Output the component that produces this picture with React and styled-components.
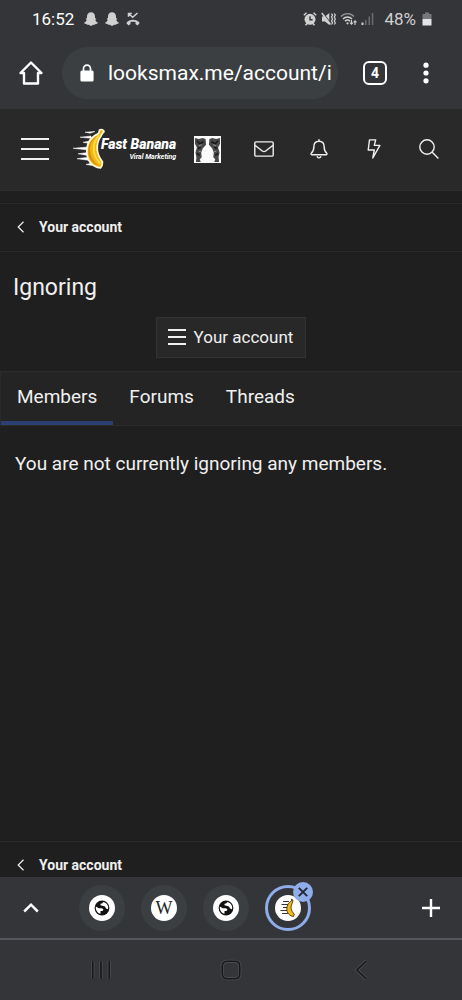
import { useState } from "react";
import styled, { createGlobalStyle } from "styled-components";

const GlobalStyle = createGlobalStyle`
    * {
        box-sizing: border-box;
    }
    body {
        margin: 0;
        background: #1f1f1f;
        color: #f0f0f0;
        font-family: Roboto, sans-serif;
    }
    button, input {
        font: inherit;
        color: inherit;
        background: none;
        border: 0;
        padding: 0;
        margin: 0;
    }
    button {
        cursor: pointer;
    }
    a {
        color: inherit;
        text-decoration: none;
    }
    svg {
        display: block;
        flex: none;
    }
`
const Page = styled.div`
    min-height: 100vh;
    display: flex;
    flex-direction: column;
`
const StatusBar = styled.div`
    height: 38px;
    padding: 0 30px 0 32px;
    display: flex;
    align-items: center;
    justify-content: space-between;
    background: #343539;
    color: #e4e4e4;
    font-size: 17px;
    line-height: 38px;
`
const StatusGroup = styled.div`
    display: flex;
    align-items: center;
    gap: ${(p) => p.$gap}px;
    color: ${(p) => p.$color};
    .time {
        color: #fff;
        margin-right: 3px;
    }
    .percent {
        margin: 0 2px 0 6px;
    }
`
const BrowserBar = styled.div`
    height: 71px;
    padding: 0 23px 2px 18px;
    display: flex;
    align-items: center;
    background: #343539;
    color: #fff;
`
const BarButton = styled.button`
    width: 26px;
    height: 40px;
    display: flex;
    align-items: center;
    justify-content: center;
`
const UrlBox = styled.label`
    flex: 1;
    min-width: 0;
    height: 52px;
    margin: 0 25px 0 18px;
    padding: 0 4px 0 18px;
    display: flex;
    align-items: center;
    gap: 14px;
    border-radius: 26px;
    background: #3b3f42;
    input {
        flex: 1;
        min-width: 0;
        font-size: 21px;
        line-height: 26px;
        outline: 0;
    }
`
const TabCount = styled.button`
    width: 24px;
    height: 24px;
    margin-right: 26px;
    border: 2px solid #fff;
    border-radius: 6px;
    font-size: 14px;
    font-weight: 700;
    line-height: 20px;
    text-align: center;
`
const SiteHeader = styled.header`
    height: 82px;
    padding: 0 6px 1px 21px;
    display: flex;
    align-items: center;
    background: #292929;
    border-bottom: 1px solid #2e2e2e;
`
const Logo = styled.a`
    display: flex;
    align-items: center;
    margin-left: 24px;
    color: #fff;
    font-style: italic;
    font-weight: 900;
    .words {
        margin-left: -5px;
        display: flex;
        flex-direction: column;
        align-items: flex-end;
        white-space: nowrap;
    }
    .name {
        font-size: 14px;
        line-height: 17px;
    }
    .tagline {
        font-size: 7px;
        line-height: 9px;
        font-weight: 700;
    }
`
const Avatar = styled.a`
    margin-left: auto;
    margin-right: 15px;
`
const HeaderButton = styled.button`
    width: 55px;
    height: 55px;
    display: flex;
    align-items: center;
    justify-content: center;
`
const Breadcrumb = styled.nav`
    height: ${(p) => (p.$bottom ? 36 : 49)}px;
    margin-top: ${(p) => (p.$bottom ? 0 : 12)}px;
    padding: 0 17px;
    border-top: 1px solid #2a2a2a;
    border-bottom: ${(p) => (p.$bottom ? 0 : 1)}px solid #2a2a2a;
    a {
        height: 46px;
        display: inline-flex;
        align-items: center;
        gap: 14px;
        font-size: 14px;
        font-weight: 700;
    }
`
const Content = styled.main`
    flex: 1;
    h1 {
        margin: 0;
        padding: 20px 13px 0;
        font-size: 23px;
        line-height: 32px;
        font-weight: 400;
    }
    p {
        margin: 0;
        padding: 25px 15px;
        font-size: 19px;
        line-height: 26px;
    }
`
const AccountButton = styled.button`
    height: 41px;
    margin: 13px auto;
    padding: 0 12px 2px 11px;
    display: flex;
    align-items: center;
    gap: 8px;
    border: 1px solid #333;
    background: #282828;
    font-size: 17px;
    line-height: 24px;
`
const Tabs = styled.div`
    height: 55px;
    display: flex;
    background: #242424;
    border: 1px solid #2b2b2b;
    border-right: 0;
`
const Tab = styled.button`
    padding: 0 16px;
    border-bottom: 4px solid ${(p) => (p.$active ? "#2b3f73" : "transparent")};
    font-size: 19px;
    line-height: 48px;
`
const TabStrip = styled.div`
    height: 63px;
    padding: 0 18px;
    display: flex;
    align-items: center;
    justify-content: space-between;
    background: #343539;
    border-bottom: 2px solid #55565b;
    color: #fff;
`
const SiteList = styled.div`
    flex: 1;
    padding-left: 35px;
    display: flex;
    gap: 16px;
`
const SiteTab = styled.button`
    position: relative;
    width: 46px;
    height: 46px;
    display: flex;
    align-items: center;
    justify-content: center;
    border-radius: 50%;
    border: 3px solid ${(p) => (p.$active ? "#8fadea" : "#3b3f41")};
    background: ${(p) => (p.$active ? "transparent" : "#3b3f41")};
`
const Favicon = styled.span`
    width: 26px;
    height: 26px;
    display: flex;
    align-items: center;
    justify-content: center;
    border-radius: 50%;
    background: #fff;
    color: #222;
    font-family: "Liberation Serif", serif;
    font-size: 18px;
    line-height: 26px;
`
const CloseBadge = styled.span`
    position: absolute;
    top: -6px;
    right: -5px;
    width: 20px;
    height: 20px;
    display: flex;
    align-items: center;
    justify-content: center;
    border-radius: 50%;
    background: #8fadea;
`
const PhoneNav = styled.nav`
    height: 60px;
    padding: 0 36px;
    display: flex;
    background: #343539;
    button {
        flex: 1;
        display: flex;
        align-items: center;
        justify-content: center;
    }
`

const Ghost = () => (
    <svg width="14" height="14" viewBox="0 0 14 14" fill="currentColor">
        <path d="M7 .3C9.500 .3 11 2 11 4.300V6.200L12.300 6.500L11.400 7.900C11.700 9.200 12.500 10 13.900 10.500L13.300 11.700L11.500 12L11 12.800H9.300L7 13.900L4.700 12.800H3L2.500 12L.7 11.700L.1 10.500C1.500 10 2.300 9.200 2.600 7.900L1.700 6.500L3 6.200V4.300C3 2 4.500 .3 7 .3Z" />
    </svg>
)

const MissedCall = () => (
    <svg width="14" height="14" viewBox="0 0 14 14" fill="none" stroke="currentColor">
        <path d="M2.500 4.800V1.500H5.800M2.500 1.500L6.700 5.300L11.500 1" strokeWidth="1.500" />
        <path d="M.3 11C3.500 6.800 10.500 6.800 13.700 11L11.500 13.500L9.500 12V10C8 9.500 6 9.500 4.500 10V12L2.500 13.500Z" fill="currentColor" stroke="none" />
    </svg>
)

const Alarm = () => (
    <svg width="14" height="14" viewBox="0 0 14 14" fill="none" stroke="currentColor">
        <circle cx="7" cy="7.300" r="5.500" fill="currentColor" stroke="none" />
        <path d="M7 4.300V7.700H9.600" stroke="#343539" strokeWidth="1.400" />
        <path d="M.8 3.200L3.500 .8M13.200 3.200L10.500 .8M2.500 13.300L4 11.500M11.500 13.300L10 11.500" strokeWidth="1.500" />
    </svg>
)

const Mute = () => (
    <svg width="15" height="14" viewBox="0 0 15 14" fill="none" stroke="currentColor">
        <path d="M1 4.500H4L8.300 1V13L4 9.500H1Z" fill="currentColor" stroke="none" />
        <path d="M1.500 .5L10 11.500" stroke="#343539" strokeWidth="1.200" />
        <path d="M.8 1L9.500 12.500" strokeWidth="1.500" />
        <path d="M10.500 1.500L11.500 3L10.500 5L11.500 7L10.500 9L11.500 11L10.500 12.500M13.300 1.500L14.300 3L13.300 5L14.300 7L13.300 9L14.300 11L13.300 12.500" strokeWidth="1.300" />
    </svg>
)

const Wifi = () => (
    <svg width="17" height="14" viewBox="0 0 17 14" fill="none" stroke="currentColor">
        <path d="M1 4.500C4.500 .7 10.500 .7 14 4.500" stroke="#929396" strokeWidth="1.400" />
        <path d="M3 7C5.500 4.200 9.500 4.200 12 7M5 9.300C6.500 7.700 8.500 7.700 10 9.300" strokeWidth="1.500" />
        <circle cx="7.500" cy="11.300" r="1.100" fill="currentColor" stroke="none" />
        <path d="M11.500 8V12M10 10.700L11.500 12.300L13 10.700M15 13V9M13.700 10.300L15 8.800L16.500 10.300" strokeWidth="1.100" />
    </svg>
)

const Signal = () => (
    <svg width="13" height="14" viewBox="0 0 13 14">
        <path d="M.5 10.500H2.500V13H.5Z" fill="#d0d0d0" />
        <path d="M4 8H5.500V13H4ZM7.500 4.500H9V13H7.500ZM10.800 1H12.300V13H10.800Z" fill="#6b6c70" />
    </svg>
)

const Battery = () => (
    <svg width="10" height="14" viewBox="0 0 10 14">
        <path d="M3 .5H7V2H9.500V7H.5V2H3Z" fill="#77787b" />
        <path d="M.5 7H9.500V13.500H.5Z" fill="#e4e4e4" />
    </svg>
)

const HomeIcon = () => (
    <svg width="26" height="26" viewBox="0 0 26 26" fill="none" stroke="currentColor" strokeWidth="2.400" strokeLinejoin="round" strokeLinecap="round">
        <path d="M2.500 13L13 2.500L23.500 13H20V23.500H6V13Z" />
    </svg>
)

const LockIcon = () => (
    <svg width="14" height="18" viewBox="0 0 14 18">
        <path d="M3.500 8V4.700A3.500 3.500 0 0 1 10.500 4.700V8" fill="none" stroke="currentColor" strokeWidth="1.700" />
        <rect x=".4" y="6.500" width="13.200" height="11" rx="1.500" fill="currentColor" />
    </svg>
)

const DotsIcon = () => (
    <svg width="6" height="22" viewBox="0 0 6 22" fill="currentColor">
        <circle cx="3" cy="3.200" r="2.600" />
        <circle cx="3" cy="11" r="2.600" />
        <circle cx="3" cy="18.800" r="2.600" />
    </svg>
)

const Lines = ({ width, height, thick }) => (
    <svg width={width} height={height} viewBox={`0 0 ${width} ${height}`} stroke="currentColor" strokeWidth={thick}>
        <path d={`M0 1H${width}M0 ${height / 2}H${width}M0 ${height - 1}H${width}`} />
    </svg>
)

const Banana = () => (
    <svg width="33" height="42" viewBox="0 0 33 42">
        <path
            d="M12 4.200L22 3.500L17 5.200ZM7 9.200L18 8V10.300ZM10 14.300L17 13V15.500ZM0 20.300L15 19V22ZM5 25.800L15 24.500V27.500ZM4 30.700L17 29V32.500ZM13 36.500L21 34.500V37.700Z"
            fill="#fff" stroke="#fff" strokeWidth=".5"
        />
        <path
            d="M26.500 2.200C28 .8 31 1.800 31 3.700C29.500 5.200 28.500 6.200 28 8C24.800 12.500 23.800 17 24.300 22C24.800 27 27 30.500 29.500 34C29.500 36.500 29 38.500 27.500 40C19 39 13.800 32.500 13.800 23.500C13.800 14.500 18.500 8.500 25.500 5.500Z"
            fill="#f4b910" stroke="#fff8dc" strokeWidth="1.700" strokeLinejoin="round"
        />
        <path d="M24.800 7.500C18.500 12 16.500 17 17.300 24C18 30 21.500 35 26.500 38C20 36 15.300 30.500 15.300 23.500C15.300 15.500 19 10.500 24.800 7.500Z" fill="#d98c0b" />
        <path d="M26 7.500C21.500 12 20 18 21 24C22 29 24.300 32.500 27.500 35.500" fill="none" stroke="#ffdc4c" strokeWidth="1.700" />
    </svg>
)

const SmallBanana = () => (
    <svg width="16" height="20" viewBox="0 0 16 20">
        <path d="M3 3.500H9M1.500 6.500H8M3 9.500H7M.5 12.500H7M2 15.500H8" stroke="#333" strokeWidth="1.100" />
        <path
            d="M11.500 1.200L13 2C12.800 5 10.800 7 11 10C11.200 12.800 13 14.500 14.300 16.300L13.500 18.500C9.500 18 6.800 15 6.800 10.800C6.800 6.800 9 4.300 11.500 3Z"
            fill="#f5b916" stroke="#4a3608" strokeWidth=".9" strokeLinejoin="round"
        />
    </svg>
)

const AvatarArt = () => (
    <svg width="27" height="27" viewBox="0 0 28 28">
        <path d="M0 0H28V28H0Z" fill="#fafafa" />
        <path d="M1 2L5 3L9 2L12 3L12.500 9L9 13L7.500 17L8 22L6 24L7 27H2L2.500 22L1.500 17L3 12L1 8Z" fill="#484848" />
        <path d="M27 2L23 3L19 2L16 3L15.500 9L19 13L20.500 17L20 22L22 24L21 27H26L25.500 22L26.500 17L25 12L27 8Z" fill="#484848" />
        <path d="M3 5L6 8L10 6M4 13L7 12M3 18L6 20M25 5L22 8L18 6M24 13L21 12M25 18L22 20" fill="none" stroke="#191919" strokeWidth="1.600" />
        <path d="M5 10L8 9M5 16H7M23 10L20 9M23 16H21" stroke="#999" />
    </svg>
)

const MailIcon = () => (
    <svg width="20" height="16" viewBox="0 0 20 16" fill="none" stroke="currentColor" strokeWidth="1.400" strokeLinejoin="round">
        <rect x=".8" y=".9" width="18.400" height="14.200" rx="1.200" />
        <path d="M1 4.200L8.300 10Q10 11.200 11.700 10L19 4.200" />
    </svg>
)

const BellIcon = () => (
    <svg width="18" height="20" viewBox="0 0 18 20" fill="none" stroke="currentColor" strokeWidth="1.400" strokeLinejoin="round" strokeLinecap="round">
        <path d="M9 .8V2.200M9 2.200C5.700 2.200 3.900 4.600 3.900 7.500C3.900 11.500 3 12.800 1.200 14.300Q.6 15.700 1.700 15.700H16.300Q17.400 15.700 16.800 14.300C15 12.800 14.100 11.500 14.100 7.500C14.100 4.600 12.300 2.200 9 2.200Z" />
        <path d="M7.200 17.800Q9 20 10.800 17.800" />
    </svg>
)

const BoltIcon = () => (
    <svg width="14" height="20" viewBox="0 0 14 20" fill="none" stroke="currentColor" strokeWidth="1.400" strokeLinejoin="round">
        <path d="M2.500 .9H8.700L7.300 6.400H12.900L5.800 19L7.300 11H1.200Z" />
    </svg>
)

const SearchIcon = () => (
    <svg width="20" height="20" viewBox="0 0 20 20" fill="none" stroke="currentColor" strokeWidth="1.400">
        <circle cx="8" cy="8" r="7.200" />
        <path d="M13.200 13.200L19.400 19.400" />
    </svg>
)

const BackIcon = () => (
    <svg width="8" height="12" viewBox="0 0 8 12" fill="none" stroke="currentColor" strokeWidth="1.200">
        <path d="M6.500 .8L1.200 6L6.500 11.200" />
    </svg>
)

const Globe = () => (
    <svg width="16" height="16" viewBox="0 0 16 16">
        <circle cx="8" cy="8" r="7.400" fill="#111" />
        <path d="M1.800 6.500L4.800 8.200H8L9.500 9.500L8.500 11H6.500V13.800C3.500 13 1.500 10.500 1.800 6.500ZM9.500 1.900L8 3.400L6.500 3.800V5.300L8.500 5.800L11 6.500L12 8.500L14 9.300L14.200 7C13.800 4.500 12 2.400 9.500 1.900Z" fill="#fff" />
    </svg>
)

const ChevronUp = () => (
    <svg width="16" height="11" viewBox="0 0 16 11" fill="none" stroke="currentColor" strokeWidth="2.500">
        <path d="M1.200 9.500L8 2.700L14.800 9.500" />
    </svg>
)

const PlusIcon = () => (
    <svg width="18" height="18" viewBox="0 0 18 18" stroke="currentColor" strokeWidth="2.400">
        <path d="M9 0V18M0 9H18" />
    </svg>
)

const CloseIcon = () => (
    <svg width="10" height="10" viewBox="0 0 10 10" stroke="#22262e" strokeWidth="1.900">
        <path d="M.8 .8L9.200 9.200M9.200 .8L.8 9.200" />
    </svg>
)

// dark glyph with a faint light edge, as the system bar draws them
const NavGlyph = ({ d }) => (
    <svg width="22" height="22" viewBox="0 0 24 24" fill="none">
        <path d={d} stroke="#4d4e51" strokeWidth="3.600" />
        <path d={d} stroke="#17181a" strokeWidth="1.800" />
    </svg>
)

const tabs = ["Members", "Forums", "Threads"]

function App() {
    const [active, setActive] = useState("Members")

    return (
        <Page>
            <GlobalStyle />
            <StatusBar>
                <StatusGroup $gap={7} $color="#d0d0d0">
                    <span className="time">16:52</span>
                    <Ghost />
                    <Ghost />
                    <MissedCall />
                </StatusGroup>
                <StatusGroup $gap={4} $color="#d0d0d0">
                    <Alarm />
                    <Mute />
                    <Wifi />
                    <Signal />
                    <span className="percent">48%</span>
                    <Battery />
                </StatusGroup>
            </StatusBar>
            <BrowserBar>
                <BarButton aria-label="Home"><HomeIcon /></BarButton>
                <UrlBox>
                    <LockIcon />
                    <input type="text" aria-label="Address" defaultValue="looksmax.me/account/i" />
                </UrlBox>
                <TabCount>4</TabCount>
                <BarButton aria-label="Menu"><DotsIcon /></BarButton>
            </BrowserBar>
            <SiteHeader>
                <button aria-label="Navigation"><Lines width={28} height={22} thick={2} /></button>
                <Logo href="#">
                    <Banana />
                    <span className="words">
                        <span className="name">Fast Banana</span>
                        <span className="tagline">Viral Marketing</span>
                    </span>
                </Logo>
                <Avatar href="#" aria-label="Profile"><AvatarArt /></Avatar>
                <HeaderButton aria-label="Messages"><MailIcon /></HeaderButton>
                <HeaderButton aria-label="Alerts"><BellIcon /></HeaderButton>
                <HeaderButton aria-label="What's new"><BoltIcon /></HeaderButton>
                <HeaderButton aria-label="Search"><SearchIcon /></HeaderButton>
            </SiteHeader>
            <Breadcrumb>
                <a href="#"><BackIcon />Your account</a>
            </Breadcrumb>
            <Content>
                <h1>Ignoring</h1>
                <AccountButton><Lines width={18} height={16} thick={2} />Your account</AccountButton>
                <Tabs>
                    {tabs.map((tab) => (
                        <Tab key={tab} $active={tab === active} onClick={() => setActive(tab)}>{tab}</Tab>
                    ))}
                </Tabs>
                <p>You are not currently ignoring any members.</p>
            </Content>
            <Breadcrumb $bottom>
                <a href="#"><BackIcon />Your account</a>
            </Breadcrumb>
            <TabStrip>
                <BarButton aria-label="Expand"><ChevronUp /></BarButton>
                <SiteList>
                    <SiteTab aria-label="Site"><Favicon><Globe /></Favicon></SiteTab>
                    <SiteTab><Favicon>W</Favicon></SiteTab>
                    <SiteTab aria-label="Site"><Favicon><Globe /></Favicon></SiteTab>
                    <SiteTab $active aria-label="Fast Banana">
                        <Favicon><SmallBanana /></Favicon>
                        <CloseBadge><CloseIcon /></CloseBadge>
                    </SiteTab>
                </SiteList>
                <BarButton aria-label="New tab"><PlusIcon /></BarButton>
            </TabStrip>
            <PhoneNav>
                <button aria-label="Recent apps"><NavGlyph d="M3 2.500V21.500M12 2.500V21.500M21 2.500V21.500" /></button>
                <button aria-label="Home screen"><NavGlyph d="M8 2.500H16Q21.500 2.500 21.500 8V16Q21.500 21.500 16 21.500H8Q2.500 21.500 2.500 16V8Q2.500 2.500 8 2.500Z" /></button>
                <button aria-label="Back"><NavGlyph d="M17.500 2.500L7.500 12L17.500 21.500" /></button>
            </PhoneNav>
        </Page>
    )
}
export default App;
